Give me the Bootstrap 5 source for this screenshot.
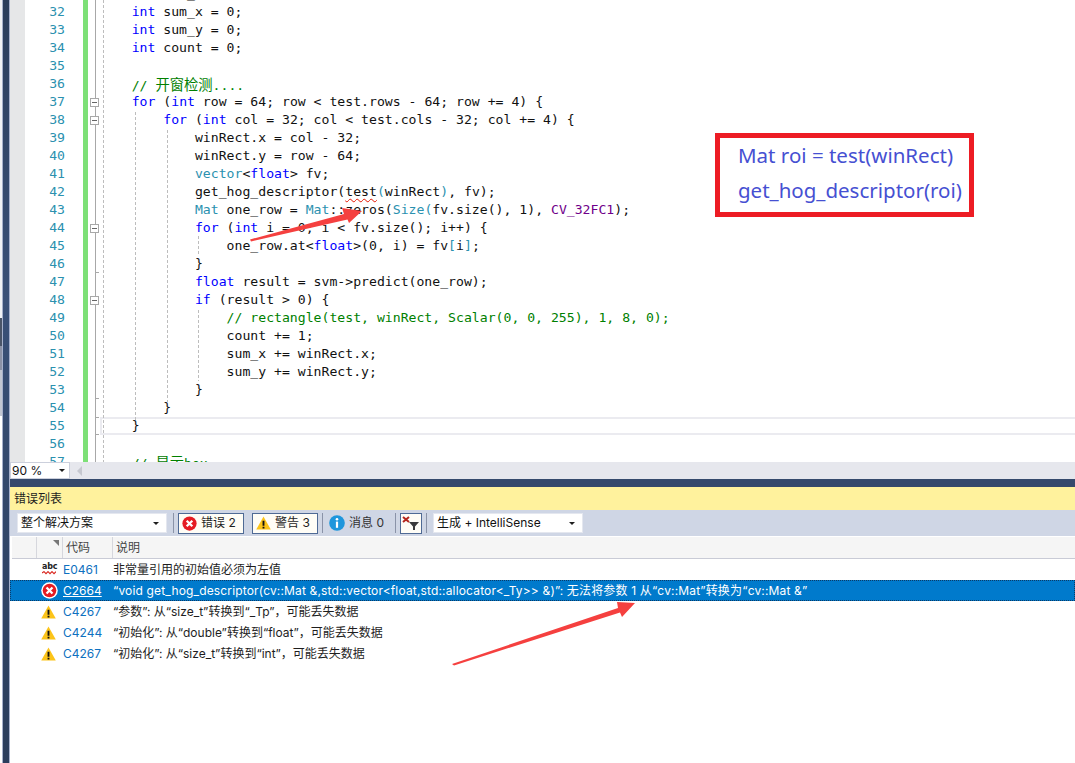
<!DOCTYPE html>
<html lang="zh-CN">
<head>
    <meta charset="UTF-8">
    <title>错误列表</title>
    <link href="https://cdn.jsdelivr.net/npm/bootstrap@5.3.0/dist/css/bootstrap.min.css" rel="stylesheet">
    <style>
        html, body { margin: 0; background: #fff; overflow: hidden; }
        .shot { position: relative; width: 1075px; height: 763px; overflow: hidden; font-family: Inter, "Noto Sans CJK SC", sans-serif; font-size: 12px; color: #1e1e1e; }

        /* window frame on the left */
        .frame-bits { width: 2px; }
        .bit-a { height: 318px; background: #f1f2f6; }
        .bit-b { height: 28px; background: #4a5468; }
        .bit-c { height: 24px; background: #8b91a6; }
        .bit-d { height: 46px; background: #c2c6d2; }
        .frame-line { width: 8px; background: linear-gradient(#2b3d5c, #3a5078 300px, #33486c 480px, #2b3d5c); border-left: 1px solid #a6b0cc; border-right: 1px solid #a6b0cc; }
        .main-col { width: 1065px; }

        /* code editor */
        .editor { position: relative; height: 462px; overflow: hidden; }
        .code-wrap { margin-top: -15px; }
        .cl { height: 18px; line-height: 18px; font-family: "DejaVu Sans Mono", monospace; font-size: 13.15px; color: #111; }
        .gm { width: 15px; background: #e6e7e8; flex: none; margin-right: 1px; }
        .ln { width: 39px; margin-right: 18px; text-align: right; color: #2b91af; flex: none; }
        .gb { width: 5px; background: #7de077; flex: none; }
        .fm { width: 12px; flex: none; }
        .cd { flex: 1; white-space: pre; min-width: 0; }
        .cur { box-shadow: inset 2px 2px 0 #ebebf0, inset 0 -2px 0 #ebebf0; }
        .kw { color: #0000ff; }
        .ty { color: #2b91af; }
        .cm { color: #008000; }
        .mc { color: #6f008a; }
        .hanzi { font-family: "Noto Sans CJK SC", sans-serif; font-size: 14.3px; }
        .squiggle { text-decoration: underline wavy #e51400 1px; text-underline-offset: 2px; }
        .overlay { position: absolute; left: 0; top: 0; pointer-events: none; }

        /* zoom row below the editor */
        .zoom-row { height: 17px; background: #e6e7ed; }
        .zoom-box { width: 60px; height: 17px; background: #fff; border: 1px solid #ccd0dc; font-size: 12px; line-height: 15px; padding-left: 1px; color: #111; }
        .caret-d { width: 0; height: 0; border-left: 3.5px solid transparent; border-right: 3.5px solid transparent; border-top: 3.5px solid #1e1e1e; }
        .scroll-left { width: 0; height: 0; margin-left: 7px; border-top: 5px solid transparent; border-bottom: 5px solid transparent; border-right: 5px solid #c6c8d0; }

        /* error list panel */
        .splitter { height: 8px; background: #35496c; }
        .panel-title { height: 23px; background: #fff29d; padding-left: 4px; line-height: 23px; color: #1e1e1e; }
        .tool-row { height: 26px; background: #cfd6e5; padding-left: 7px; }
        .combo { height: 20px; background: #fff; border: 1px solid #e4e7ef; padding: 0 7px 0 3px; color: #111; }
        .combo-scope { width: 150px; }
        .sep { width: 1px; height: 20px; background: #8a93a8; flex: none; }
        .tool-btn { height: 21px; padding: 0 0 0 3px; gap: 4px; background: #fffdf6; border: 1px solid #4f6a95; border-radius: 0; font-size: 12px; color: #1e1e1e; line-height: 1; }
        .tool-btn-w { width: 66px; }
        .tool-plain { width: 58px; gap: 4px; color: #333; }
        .filter-btn { width: 22px; padding: 0; justify-content: center; }
        .sp-6 { margin-left: 6px; }
        .sp-4 { margin-left: 4px; }
        .sp-8 { margin-left: 8px; }
        .head-row { height: 23px; margin-left: 2px; background: #f5f5f5; border-bottom: 1px solid #c9cbd6; border-top: 1px solid #fff; color: #444; line-height: 21px; }
        .hc { border-right: 1px solid #d6d7dd; height: 21px; flex: none; position: relative; }
        .hc-a { width: 25px; }
        .hc-b { width: 26px; }
        .hc-c { width: 50px; padding-left: 3px; }
        .hc-d { padding-left: 3px; }
        .sort-mark { position: absolute; right: 3px; top: 3px; }
        .err-row { height: 21px; line-height: 21px; white-space: nowrap; }
        .err-row.picked { background: #007acc; color: #fff; outline: 1px dotted #0b3a66; outline-offset: -1px; }
        .picked-text { letter-spacing: .16px; }
        .ec-icon { width: 53px; padding-left: 31px; flex: none; }
        .ec-code { width: 50px; flex: none; color: #0e70c0; }
        .picked .ec-code { color: #fff; text-decoration: underline; }
        .abc-mark { width: 14px; height: 14px; line-height: 8px; font-size: 8px; font-weight: 700; font-family: "DejaVu Sans", sans-serif; text-align: center; color: #222; letter-spacing: -.2px; margin-left: 1px; }

        /* note box */
        .note-box { position: absolute; left: 715px; top: 133px; width: 259px; height: 84px; background: #fff; border: 5px solid #ed1c24; padding-left: 18px; color: #4650d2; font-family: "Noto Sans", sans-serif; font-size: 20.5px; line-height: 35px; white-space: nowrap; }
    </style>
</head>
<body>

<div class="shot d-flex">
    <div class="frame-bits">
        <div class="bit-a"></div>
        <div class="bit-b"></div>
        <div class="bit-c"></div>
        <div class="bit-d"></div>
    </div>
    <div class="frame-line flex-shrink-0"></div>

    <div class="main-col d-flex flex-column">
        <!-- editor -->
        <div class="editor">
            <div class="code-wrap">
                <div class="cl d-flex"><div class="gm"></div><div class="ln"></div><div class="gb"></div><div class="fm"></div><div class="cd">           _</div></div>
                <div class="cl d-flex"><div class="gm"></div><div class="ln">32</div><div class="gb"></div><div class="fm"></div><div class="cd">    <span class="kw">int</span> sum_x = 0;</div></div>
                <div class="cl d-flex"><div class="gm"></div><div class="ln">33</div><div class="gb"></div><div class="fm"></div><div class="cd">    <span class="kw">int</span> sum_y = 0;</div></div>
                <div class="cl d-flex"><div class="gm"></div><div class="ln">34</div><div class="gb"></div><div class="fm"></div><div class="cd">    <span class="kw">int</span> count = 0;</div></div>
                <div class="cl d-flex"><div class="gm"></div><div class="ln">35</div><div class="gb"></div><div class="fm"></div><div class="cd"></div></div>
                <div class="cl d-flex"><div class="gm"></div><div class="ln">36</div><div class="gb"></div><div class="fm"></div><div class="cd cm">    // <span class="hanzi">开窗检测</span>....</div></div>
                <div class="cl d-flex"><div class="gm"></div><div class="ln">37</div><div class="gb"></div><div class="fm"></div><div class="cd">    <span class="kw">for</span> (<span class="kw">int</span> row = 64; row &lt; test.rows - 64; row += 4) {</div></div>
                <div class="cl d-flex"><div class="gm"></div><div class="ln">38</div><div class="gb"></div><div class="fm"></div><div class="cd">        <span class="kw">for</span> (<span class="kw">int</span> col = 32; col &lt; test.cols - 32; col += 4) {</div></div>
                <div class="cl d-flex"><div class="gm"></div><div class="ln">39</div><div class="gb"></div><div class="fm"></div><div class="cd">            winRect.x = col - 32;</div></div>
                <div class="cl d-flex"><div class="gm"></div><div class="ln">40</div><div class="gb"></div><div class="fm"></div><div class="cd">            winRect.y = row - 64;</div></div>
                <div class="cl d-flex"><div class="gm"></div><div class="ln">41</div><div class="gb"></div><div class="fm"></div><div class="cd">            <span class="ty">vector</span>&lt;<span class="kw">float</span>&gt; fv;</div></div>
                <div class="cl d-flex"><div class="gm"></div><div class="ln">42</div><div class="gb"></div><div class="fm"></div><div class="cd">            get_hog_descriptor(<span class="squiggle">test</span><span class="ty">(</span>winRect<span class="ty">)</span>, fv);</div></div>
                <div class="cl d-flex"><div class="gm"></div><div class="ln">43</div><div class="gb"></div><div class="fm"></div><div class="cd">            <span class="ty">Mat</span> one_row = <span class="ty">Mat</span>::zeros(<span class="ty">Size(</span>fv.size(), 1), <span class="mc">CV_32FC1</span>);</div></div>
                <div class="cl d-flex"><div class="gm"></div><div class="ln">44</div><div class="gb"></div><div class="fm"></div><div class="cd">            <span class="kw">for</span> (<span class="kw">int</span> i = 0; i &lt; fv.size(); i++) {</div></div>
                <div class="cl d-flex"><div class="gm"></div><div class="ln">45</div><div class="gb"></div><div class="fm"></div><div class="cd">                one_row.at&lt;<span class="kw">float</span>&gt;(0, i) = fv<span class="ty">[</span>i<span class="ty">]</span>;</div></div>
                <div class="cl d-flex"><div class="gm"></div><div class="ln">46</div><div class="gb"></div><div class="fm"></div><div class="cd">            }</div></div>
                <div class="cl d-flex"><div class="gm"></div><div class="ln">47</div><div class="gb"></div><div class="fm"></div><div class="cd">            <span class="kw">float</span> result = svm-&gt;predict(one_row);</div></div>
                <div class="cl d-flex"><div class="gm"></div><div class="ln">48</div><div class="gb"></div><div class="fm"></div><div class="cd">            <span class="kw">if</span> (result &gt; 0) {</div></div>
                <div class="cl d-flex"><div class="gm"></div><div class="ln">49</div><div class="gb"></div><div class="fm"></div><div class="cd cm">                // rectangle(test, winRect, Scalar(0, 0, 255), 1, 8, 0);</div></div>
                <div class="cl d-flex"><div class="gm"></div><div class="ln">50</div><div class="gb"></div><div class="fm"></div><div class="cd">                count += 1;</div></div>
                <div class="cl d-flex"><div class="gm"></div><div class="ln">51</div><div class="gb"></div><div class="fm"></div><div class="cd">                sum_x += winRect.x;</div></div>
                <div class="cl d-flex"><div class="gm"></div><div class="ln">52</div><div class="gb"></div><div class="fm"></div><div class="cd">                sum_y += winRect.y;</div></div>
                <div class="cl d-flex"><div class="gm"></div><div class="ln">53</div><div class="gb"></div><div class="fm"></div><div class="cd">            }</div></div>
                <div class="cl d-flex"><div class="gm"></div><div class="ln">54</div><div class="gb"></div><div class="fm"></div><div class="cd">        }</div></div>
                <div class="cl d-flex"><div class="gm"></div><div class="ln">55</div><div class="gb"></div><div class="fm"></div><div class="cd cur">    }</div></div>
                <div class="cl d-flex"><div class="gm"></div><div class="ln">56</div><div class="gb"></div><div class="fm"></div><div class="cd"></div></div>
                <div class="cl d-flex"><div class="gm"></div><div class="ln">57</div><div class="gb"></div><div class="fm"></div><div class="cd cm">    // <span class="hanzi">显示</span>box</div></div>
            </div>
            <!-- outlining lines and indent guides -->
            <svg class="overlay" width="400" height="462" viewBox="10 0 400 462">
                <g stroke="#a8a8a8" fill="none">
                    <path d="M95.5 0V462"/>
                    <path d="M95 272.5H99M95 398.5H99M95 417.5H99M95 434.5H99"/>
                </g>
                <g stroke="#bdbdbd" stroke-dasharray="3 2" fill="none">
                    <path d="M103.5 0V462"/>
                    <path d="M135.5 112V420"/>
                    <path d="M167.5 130V402"/>
                    <path d="M198.5 236V255M198.5 310V381"/>
                </g>
                <g fill="#fff" stroke="#a8a8a8">
                    <rect x="90.5" y="98.5" width="8" height="8"/>
                    <rect x="90.5" y="116.5" width="8" height="8"/>
                    <rect x="90.5" y="224.5" width="8" height="8"/>
                    <rect x="90.5" y="296.5" width="8" height="8"/>
                </g>
                <path stroke="#666" d="M92 102.5h5M92 120.5h5M92 228.5h5M92 300.5h5"/>
            </svg>
        </div>

        <!-- zoom row -->
        <div class="zoom-row d-flex align-items-center">
            <div class="zoom-box d-flex align-items-center justify-content-between pe-1"><span>90 %</span><span class="caret-d"></span></div>
            <span class="scroll-left"></span>
        </div>

        <div class="splitter"></div>
        <div class="panel-title">错误列表</div>

        <!-- toolbar -->
        <div class="tool-row d-flex align-items-center">
            <div class="combo combo-scope d-flex align-items-center justify-content-between"><span>整个解决方案</span><span class="caret-d"></span></div>
            <span class="sep sp-6"></span>
            <button type="button" class="btn tool-btn tool-btn-w d-flex align-items-center sp-4">
                <svg width="15" height="15" viewBox="0 0 16 16"><circle cx="8" cy="8" r="7.6" fill="#e51c23"/><path d="M5 5l6 6M11 5l-6 6" stroke="#fff" stroke-width="2.4"/></svg>
                <span>错误 2</span>
            </button>
            <button type="button" class="btn tool-btn tool-btn-w d-flex align-items-center sp-8">
                <svg width="15" height="14" viewBox="0 0 16 15"><path d="M8 .5L15.8 14.5H.2z" fill="#fcc419"/><path d="M7 5h2v5.4H7zM7 11.4h2v2H7z" fill="#111"/></svg>
                <span>警告 3</span>
            </button>
            <span class="sep sp-4"></span>
            <div class="d-flex align-items-center tool-plain sp-6">
                <svg width="16" height="16" viewBox="0 0 16 16"><circle cx="8" cy="8" r="7.8" fill="#1e96dc"/><circle cx="8" cy="4.2" r="1.3" fill="#fff"/><path d="M6.9 6.6h2.2v6.2H6.9z" fill="#fff"/></svg>
                <span>消息 0</span>
            </div>
            <span class="sep sp-8"></span>
            <button type="button" class="btn tool-btn filter-btn d-flex align-items-center sp-4">
                <svg width="18" height="16" viewBox="0 0 18 16"><path d="M1 2l6 5M7 2l-6 5" stroke="#b5261e" stroke-width="2"/><path d="M7 7h10l-4 4.4V15h-2v-3.6z" fill="#3a3a3a"/></svg>
            </button>
            <span class="sep sp-4"></span>
            <div class="combo combo-scope d-flex align-items-center justify-content-between sp-6"><span>生成 + IntelliSense</span><span class="caret-d"></span></div>
        </div>

        <!-- list -->
        <div class="head-row d-flex">
            <div class="hc hc-a"></div>
            <div class="hc hc-b"><svg class="sort-mark" width="6" height="6" viewBox="0 0 6 6"><path d="M0 0H6V6z" fill="#777"/></svg></div>
            <div class="hc hc-c">代码</div>
            <div class="hc-d">说明</div>
        </div>
        <div class="err-row d-flex align-items-center">
            <div class="ec-icon d-flex align-items-center">
                <div class="abc-mark">abc<svg class="d-block" width="14" height="4" viewBox="0 0 14 4"><path d="M0 2l2-1.4 2 2 2-2 2 2 2-2 2 2 2-2" fill="none" stroke="#d9251d" stroke-width="1.1"/></svg></div>
            </div>
            <div class="ec-code">E0461</div>
            <div>非常量引用的初始值必须为左值</div>
        </div>
        <div class="err-row picked d-flex align-items-center">
            <div class="ec-icon d-flex align-items-center">
                <svg width="17" height="17" viewBox="0 0 16 16"><circle cx="8" cy="8" r="7.8" fill="#fff"/><circle cx="8" cy="8" r="6.4" fill="#e51c23"/><path d="M5.2 5.2l5.6 5.6M10.8 5.2l-5.6 5.6" stroke="#fff" stroke-width="2.2"/></svg>
            </div>
            <div class="ec-code">C2664</div>
            <div class="picked-text">“void get_hog_descriptor(cv::Mat &amp;,std::vector&lt;float,std::allocator&lt;_Ty&gt;&gt; &amp;)”: 无法将参数 1 从“cv::Mat”转换为“cv::Mat &amp;”</div>
        </div>
        <div class="err-row d-flex align-items-center">
            <div class="ec-icon d-flex align-items-center">
                <svg width="15" height="14" viewBox="0 0 16 15"><path d="M8 .5L15.8 14.5H.2z" fill="#fcc419"/><path d="M7 5h2v5.4H7zM7 11.4h2v2H7z" fill="#111"/></svg>
            </div>
            <div class="ec-code">C4267</div>
            <div>“参数”: 从“size_t”转换到“_Tp”，可能丢失数据</div>
        </div>
        <div class="err-row d-flex align-items-center">
            <div class="ec-icon d-flex align-items-center">
                <svg width="15" height="14" viewBox="0 0 16 15"><path d="M8 .5L15.8 14.5H.2z" fill="#fcc419"/><path d="M7 5h2v5.4H7zM7 11.4h2v2H7z" fill="#111"/></svg>
            </div>
            <div class="ec-code">C4244</div>
            <div>“初始化”: 从“double”转换到“float”，可能丢失数据</div>
        </div>
        <div class="err-row d-flex align-items-center">
            <div class="ec-icon d-flex align-items-center">
                <svg width="15" height="14" viewBox="0 0 16 15"><path d="M8 .5L15.8 14.5H.2z" fill="#fcc419"/><path d="M7 5h2v5.4H7zM7 11.4h2v2H7z" fill="#111"/></svg>
            </div>
            <div class="ec-code">C4267</div>
            <div>“初始化”: 从“size_t”转换到“int”，可能丢失数据</div>
        </div>
    </div>

    <!-- annotations drawn over the screenshot -->
    <div class="note-box">
        <div>Mat roi = test(winRect)</div>
        <div>get_hog_descriptor(roi)</div>
    </div>
    <svg class="overlay" width="1075" height="763">
        <path d="M250 239.5L344 214L342 208L362 211L349 223L347.500 219.500L251 241.500z" fill="#f5403f"/>
        <path d="M452 664L618 608L617 602L635 603L622 617L620 612.500L454 665.500z" fill="#f5403f"/>
    </svg>
</div>

<script src="https://cdn.jsdelivr.net/npm/bootstrap@5.3.0/dist/js/bootstrap.bundle.min.js"></script>
</body>
</html>
